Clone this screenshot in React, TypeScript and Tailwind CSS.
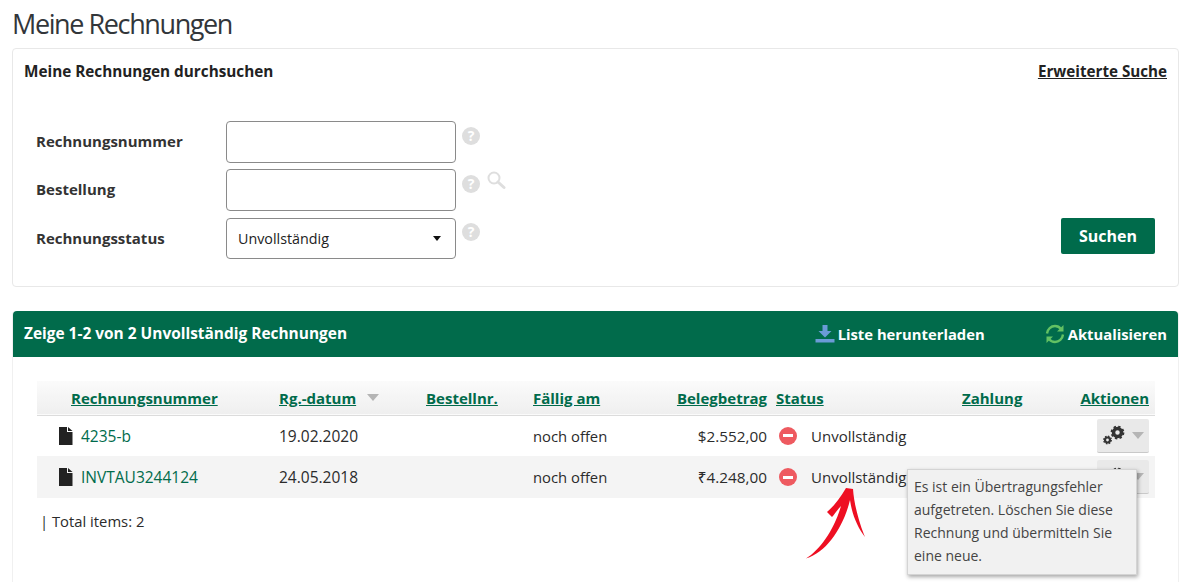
import React from "react"

const font = { fontFamily: '"Open Sans", "Noto Sans", sans-serif' }

const HelpIcon = () => (
  <span className="flex h-[18px] w-[18px] shrink-0 items-center justify-center rounded-full bg-[#dedede] text-[14px] font-bold leading-none text-white">
    ?
  </span>
)

const SearchIcon = () => (
  <svg width="20" height="20" viewBox="0 0 20 20" fill="none" stroke="#dedede">
    <circle cx="8" cy="8" r="5.5" strokeWidth="2" />
    <path d="M12 12l6 5.5" strokeWidth="3" strokeLinecap="round" />
  </svg>
)

const DownloadIcon = () => (
  <svg width="20" height="18" viewBox="0 0 20 18">
    <path d="M7.5 0h5v6h4l-6.500 6.500L3.500 6h4z" fill="#6b9bd6" />
    <path d="M0.500 14h19v3.500h-19z" fill="#6b9bd6" />
  </svg>
)

const RefreshIcon = () => (
  <svg width="20" height="20" viewBox="0 0 20 20" fill="none">
    <path d="M2 9.500C2.500 5 6 2 10 2c2.500 0 4.500 1 6 3" stroke="#63c163" strokeWidth="2.400" />
    <path d="M18 10.500c-.5 4.500-4 7.500-8 7.500-2.500 0-4.500-1-6-3" stroke="#63c163" strokeWidth="2.400" />
    <path d="M18.500 1v6.500H12z" fill="#63c163" />
    <path d="M1.500 19v-6.500H8z" fill="#63c163" />
  </svg>
)

const FileIcon = () => (
  <svg width="14" height="18" viewBox="0 0 14 18" className="shrink-0">
    <path d="M0 0h8v5h5.500v13H0z" fill="#222" />
    <path d="M9 0l4.500 4H9z" fill="#222" />
  </svg>
)

const MinusIcon = () => (
  <span className="flex h-[18px] w-[18px] items-center justify-center rounded-full bg-[#ee5a60]">
    <span className="h-[3px] w-[10px] bg-white" />
  </span>
)

const GearsIcon = () => (
  <svg width="24" height="20" viewBox="0 0 24 20" fill="none" stroke="#333">
    <circle cx="14.500" cy="7.500" r="4" strokeWidth="3.500" />
    <circle cx="14.500" cy="7.500" r="6" strokeWidth="1.800" strokeDasharray="2.400 2.310" />
    <circle cx="4.500" cy="15" r="2.500" strokeWidth="2.200" />
    <circle cx="4.500" cy="15" r="3.800" strokeWidth="1.300" strokeDasharray="1.600 1.380" />
  </svg>
)

const ArrowMark = () => (
  <svg width="90" height="85" viewBox="0 0 90 85" className="absolute left-[790px] top-[480px]">
    <path
      d="M56 8L63 9C64 25 70 45 75 57C68 48 62 35 60 20C54 45 38 72 16 78.500C30 70 44 50 51 26C47 30 44 35 42 37L37 32C44 26 50 18 56 8Z"
      fill="#ee0f22"
    />
  </svg>
)

const ActionButton = () => (
  <button className="flex h-[34px] w-[52px] items-center justify-center gap-[5px] rounded-[2px] border-b border-[#c9c9c9] bg-[#e9e9e9]">
    <GearsIcon />
    <span className="h-0 w-0 border-x-[6px] border-t-[7px] border-x-transparent border-t-[#b5b5b5]" />
  </button>
)

const SortLink = ({ children }: { children: React.ReactNode }) => (
  <a className="font-bold text-[#006b4b] underline">{children}</a>
)

const rows = [
  { id: "4235-b", datum: "19.02.2020", betrag: "$2.552,00", striped: false },
  { id: "INVTAU3244124", datum: "24.05.2018", betrag: "₹4.248,00", striped: true },
]

const formRows = [
  { label: "Rechnungsnummer", search: false },
  { label: "Bestellung", search: true },
]

export default function App() {
  return (
    <div style={font} className="relative h-[582px] w-[1195px] overflow-hidden bg-white text-[15px] text-[#2b2b2b]">
      <div className="px-3 pr-4">
        <h1 className="h-[48px] text-[27px] leading-[48px] tracking-[-1.4px] text-[#32363a]">Meine Rechnungen</h1>

        <section className="h-[239px] rounded-[4px] border border-[#e8e8e8] px-[11px]">
          <div className="flex items-center justify-between pt-[12px] leading-[20px]">
            <h2 className="text-[15.300px] font-bold text-[#222]">Meine Rechnungen durchsuchen</h2>
            <a className="text-[15.200px] font-bold text-[#222] underline">Erweiterte Suche</a>
          </div>

          <div className="mt-[40px] flex items-end justify-between pl-[12px] pr-[12px]">
            <div className="flex flex-col gap-[6px]">
              {formRows.map((r) => (
                <div key={r.label} className="flex">
                  <label className="flex w-[190px] items-center pb-[2px] font-bold text-[#333]">{r.label}</label>
                  <input className="h-[42px] w-[230px] rounded-[4px] border border-[#8a8a8a] bg-white" />
                  <div className="ml-[6px] mt-[6px] flex h-fit items-start gap-[6px]">
                    <HelpIcon />
                    {r.search && (
                      <span className="-mt-[5px]">
                        <SearchIcon />
                      </span>
                    )}
                  </div>
                </div>
              ))}
              <div className="mt-[1px] flex">
                <label className="flex w-[190px] items-center font-bold text-[#333]">Rechnungsstatus</label>
                <div className="flex h-[41px] w-[230px] items-center justify-between rounded-[4px] border border-[#8a8a8a] pl-[11px] pr-[14px] text-[14.300px] text-[#222]">
                  <span>Unvollständig</span>
                  <span className="h-0 w-0 border-x-[4px] border-t-[5px] border-x-transparent border-t-[#111]" />
                </div>
                <div className="ml-[6px] mt-[5px] h-fit">
                  <HelpIcon />
                </div>
              </div>
            </div>
            <button className="mb-[5px] h-[36px] w-[94px] rounded-[2px] bg-[#006b4b] text-[16px] font-bold text-white">Suchen</button>
          </div>
        </section>

        <section className="mt-[24px] h-[300px] rounded-t-[4px] border-x border-[#f0f0f0]">
          <div className="flex h-[46px] items-center justify-between rounded-t-[4px] bg-[#016b4b] pl-[11px] pr-[11px] font-bold text-white">
            <span className="text-[15.450px]">Zeige 1-2 von 2 Unvollständig Rechnungen</span>
            <div className="flex items-center text-[14.800px]">
              <span className="flex items-center gap-[3px]">
                <DownloadIcon />
                Liste herunterladen
              </span>
              <span className="ml-[60px] flex items-center gap-[3px]">
                <RefreshIcon />
                Aktualisieren
              </span>
            </div>
          </div>

          <div className="ml-[24px] mr-[23px] mt-[24px]">
            <table className="w-[1118px] table-fixed border-collapse">
              <colgroup>
                <col className="w-[242px]" />
                <col className="w-[147px]" />
                <col className="w-[107px]" />
                <col className="w-[117px]" />
                <col className="w-[126px]" />
                <col className="w-[186px]" />
                <col className="w-[98px]" />
                <col className="w-[95px]" />
              </colgroup>
              <thead>
                <tr className="h-[34px] border-b border-[#dcdcdc] bg-gradient-to-b from-[#fbfbfb] to-[#efefef] text-left">
                  <th className="pl-[34px] font-normal">
                    <SortLink>Rechnungsnummer</SortLink>
                  </th>
                  <th className="font-normal">
                    <div className="flex items-center gap-[11px]">
                      <SortLink>Rg.-datum</SortLink>
                      <span className="h-0 w-0 border-x-[6px] border-t-[7px] border-x-transparent border-t-[#b5b5b5]" />
                    </div>
                  </th>
                  <th className="font-normal">
                    <SortLink>Bestellnr.</SortLink>
                  </th>
                  <th className="font-normal">
                    <SortLink>Fällig am</SortLink>
                  </th>
                  <th className="pr-[9px] text-right font-normal">
                    <SortLink>Belegbetrag</SortLink>
                  </th>
                  <th className="font-normal">
                    <SortLink>Status</SortLink>
                  </th>
                  <th className="font-normal">
                    <SortLink>Zahlung</SortLink>
                  </th>
                  <th className="pr-[6px] text-right font-normal">
                    <SortLink>Aktionen</SortLink>
                  </th>
                </tr>
              </thead>
              <tbody>
                {rows.map((row) => (
                  <tr key={row.id} className={row.striped ? "h-[42px] bg-[#f4f4f4]" : "h-[41px]"}>
                    <td className="pl-[22px]">
                      <div className="flex items-center gap-2">
                        <FileIcon />
                        <a className="pt-[2px] text-[15.500px] text-[#006b4b]">{row.id}</a>
                      </div>
                    </td>
                    <td className="pt-[2px] text-[15.500px]">{row.datum}</td>
                    <td></td>
                    <td className="text-[14.800px]">noch offen</td>
                    <td className="pr-[9px] pt-[1px] text-right text-[15.300px]">{row.betrag}</td>
                    <td>
                      <div className="flex items-center gap-[14px] pl-[3px]">
                        <MinusIcon />
                        <span>Unvollständig</span>
                      </div>
                    </td>
                    <td></td>
                    <td className="pr-[6px]">
                      <div className="flex justify-end">
                        <ActionButton />
                      </div>
                    </td>
                  </tr>
                ))}
              </tbody>
            </table>
            <p className="mt-[12px] pl-[3px] text-[14.800px] leading-[22px]">| Total items: 2</p>
          </div>
        </section>
      </div>

      <div className="absolute left-[907px] top-[469px] h-[106px] w-[230px] border border-[#d4d4d4] bg-[#f1f1f1] px-[6px] py-[5px] text-[14px] leading-[23px] text-[#444] shadow-[1px_2px_4px_rgba(0,0,0,0.35)]">
        Es ist ein Übertragungsfehler aufgetreten. Löschen Sie diese Rechnung und übermitteln Sie eine neue.
      </div>
      <ArrowMark />
    </div>
  )
}
